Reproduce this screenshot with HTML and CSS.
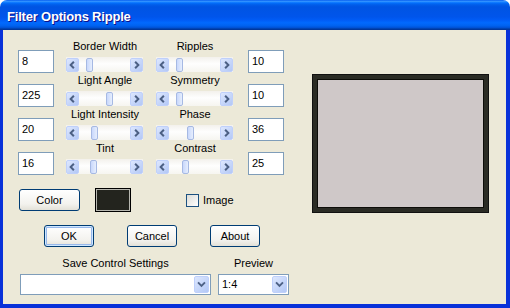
FILE: index.html
```html
<!DOCTYPE html>
<html lang="en">
<head>
<meta charset="UTF-8">
<title>Filter Options Ripple</title>
<link rel="stylesheet" href="styles.css">
</head>
<body>
<div class="window">
    <div class="titlebar"><span class="title">Filter Options Ripple</span></div>
    <div class="client">
        <div class="controls">
            <div class="row">
                <div class="field left">8</div>
                <div class="label c2">Border Width</div>
                <div class="label c3">Ripples</div>
                <div class="scroll c2"><span class="arrow"><svg viewBox="0 0 12 13"><path d="M7.5 3 4 6.5 7.5 10"/></svg></span><span class="track"><span class="thumb" style="left:7px"></span></span><span class="arrow"><svg viewBox="0 0 12 13"><path d="M4.5 3 8 6.5 4.5 10"/></svg></span></div>
                <div class="scroll c3"><span class="arrow"><svg viewBox="0 0 12 13"><path d="M7.5 3 4 6.5 7.5 10"/></svg></span><span class="track"><span class="thumb" style="left:7px"></span></span><span class="arrow"><svg viewBox="0 0 12 13"><path d="M4.5 3 8 6.5 4.5 10"/></svg></span></div>
                <div class="field right">10</div>
            </div>
            <div class="row">
                <div class="field left">225</div>
                <div class="label c2">Light Angle</div>
                <div class="label c3">Symmetry</div>
                <div class="scroll c2"><span class="arrow"><svg viewBox="0 0 12 13"><path d="M7.5 3 4 6.5 7.5 10"/></svg></span><span class="track"><span class="thumb" style="left:27px"></span></span><span class="arrow"><svg viewBox="0 0 12 13"><path d="M4.5 3 8 6.5 4.5 10"/></svg></span></div>
                <div class="scroll c3"><span class="arrow"><svg viewBox="0 0 12 13"><path d="M7.5 3 4 6.5 7.5 10"/></svg></span><span class="track"><span class="thumb" style="left:7px"></span></span><span class="arrow"><svg viewBox="0 0 12 13"><path d="M4.5 3 8 6.5 4.5 10"/></svg></span></div>
                <div class="field right">10</div>
            </div>
            <div class="row">
                <div class="field left">20</div>
                <div class="label c2">Light Intensity</div>
                <div class="label c3">Phase</div>
                <div class="scroll c2"><span class="arrow"><svg viewBox="0 0 12 13"><path d="M7.5 3 4 6.5 7.5 10"/></svg></span><span class="track"><span class="thumb" style="left:12px"></span></span><span class="arrow"><svg viewBox="0 0 12 13"><path d="M4.5 3 8 6.5 4.5 10"/></svg></span></div>
                <div class="scroll c3"><span class="arrow"><svg viewBox="0 0 12 13"><path d="M7.5 3 4 6.5 7.5 10"/></svg></span><span class="track"><span class="thumb" style="left:18px"></span></span><span class="arrow"><svg viewBox="0 0 12 13"><path d="M4.5 3 8 6.5 4.5 10"/></svg></span></div>
                <div class="field right">36</div>
            </div>
            <div class="row">
                <div class="field left">16</div>
                <div class="label c2">Tint</div>
                <div class="label c3">Contrast</div>
                <div class="scroll c2"><span class="arrow"><svg viewBox="0 0 12 13"><path d="M7.5 3 4 6.5 7.5 10"/></svg></span><span class="track"><span class="thumb" style="left:11px"></span></span><span class="arrow"><svg viewBox="0 0 12 13"><path d="M4.5 3 8 6.5 4.5 10"/></svg></span></div>
                <div class="scroll c3"><span class="arrow"><svg viewBox="0 0 12 13"><path d="M7.5 3 4 6.5 7.5 10"/></svg></span><span class="track"><span class="thumb" style="left:13px"></span></span><span class="arrow"><svg viewBox="0 0 12 13"><path d="M4.5 3 8 6.5 4.5 10"/></svg></span></div>
                <div class="field right">25</div>
            </div>

            <div class="color-row">
                <div class="btn color-btn">Color</div>
                <div class="swatch"></div>
                <div class="check"></div>
                <span class="check-label">Image</span>
            </div>

            <div class="button-row">
                <div class="btn focused">OK</div>
                <div class="btn">Cancel</div>
                <div class="btn">About</div>
            </div>

            <div class="save-row">
                <div class="label">Save Control Settings</div>
                <div class="label">Preview</div>
                <div class="combo"><span class="value"></span><span class="drop"><svg viewBox="0 0 15 17"><path d="M3.5 6 7.5 10 11.5 6"/></svg></span></div>
                <div class="combo"><span class="value">1:4</span><span class="drop"><svg viewBox="0 0 15 17"><path d="M3.5 6 7.5 10 11.5 6"/></svg></span></div>
            </div>
        </div>

        <div class="preview">
            <div class="preview-inner"></div>
        </div>
    </div>
</div>
</body>
</html>
```

FILE: styles.css
```css
body {
    margin: 0;
    background: #fff;
    font-family: "Liberation Sans", Arial, sans-serif;
    font-size: 11px;
    color: #000;
}
.window {
    width: 510px;
    height: 308px;
    display: flex;
    flex-direction: column;
    border-radius: 7px 7px 0 0;
    overflow: hidden;
}
.titlebar {
    height: 30px;
    flex: none;
    display: flex;
    align-items: center;
    padding-left: 7px;
    background: linear-gradient(to bottom, #0058ee 0%, #3593ff 4%, #288eff 6%, #127dff 8%, #036ffc 10%, #0262ee 14%, #0057e5 20%, #0054e3 24%, #0055eb 56%, #005bf5 66%, #026afe 76%, #0062ef 86%, #0052d6 92%, #0040ab 96%, #003092 100%);
}
.title {
    color: #fff;
    font-weight: bold;
    font-size: 13px;
    letter-spacing: -0.2px;
    text-shadow: 1px 1px #0f1089;
    margin-top: 2px;
}
.client {
    flex: 1;
    display: flex;
    background: #ece9d8;
    border: 0 solid #0831d9;
    border-width: 0 4px 4px 3px;
}
.controls {
    width: 271px;
    margin-left: 15px;
    padding-top: 10px;
}

/* slider rows */
.row {
    display: grid;
    grid-template-columns: 36px 78px 78px 38px;
    grid-template-rows: 17px 17px;
    column-gap: 12px;
}
.label {
    grid-row: 1;
    line-height: 13px;
    text-align: center;
}
.c2 { grid-column: 2; }
.c3 { grid-column: 3; }
.field {
    grid-row: 1 / 3;
    align-self: end;
    margin-bottom: 1px;
    width: 36px;
    height: 23px;
    box-sizing: border-box;
    border: 1px solid #7f9db9;
    background: #fff;
    padding: 4px 0 0 3px;
    line-height: 13px;
}
.field.left { grid-column: 1; }
.field.right { grid-column: 4; justify-self: end; }
.scroll {
    grid-row: 2;
    width: 77px;
    height: 15px;
    display: flex;
    align-self: start;
    background: linear-gradient(to bottom, #f3f1ec, #fefefe 45%, #f6f5f0);
}
.arrow {
    width: 13px;
    height: 14px;
    box-sizing: border-box;
    border: 1px solid #bfd0fb;
    border-radius: 2px;
    background: linear-gradient(135deg, #dde7fe, #b3c8f6);
    margin-top: 1px;
}
.arrow svg {
    display: block;
    width: 11px;
    height: 12px;
}
.arrow path, .drop path {
    fill: none;
    stroke: #4d6185;
    stroke-width: 2.2;
}
.track {
    flex: 1;
    position: relative;
}
.thumb {
    position: absolute;
    top: 1px;
    width: 7px;
    height: 14px;
    box-sizing: border-box;
    border: 1px solid #a6b9e3;
    border-radius: 2px;
    background: linear-gradient(to right, #c9d8fc, #e6eefd);
}

/* color / image row */
.color-row {
    display: flex;
    align-items: center;
    margin-top: 12px;
    height: 24px;
}
.btn {
    width: 50px;
    height: 22px;
    box-sizing: border-box;
    border: 1px solid #003c74;
    border-radius: 3px;
    background: linear-gradient(to bottom, #fff, #f3f2ee 70%, #e3e1d8);
    text-align: center;
    line-height: 20px;
}
.color-btn {
    width: 61px;
    margin-left: 1px;
}
.btn.focused {
    box-shadow: inset 0 0 0 1px #cee7ff, inset 0 0 0 2px #98b8ea;
}
.swatch {
    width: 36px;
    height: 24px;
    box-sizing: border-box;
    margin-left: 15px;
    border: 1px solid #000;
    box-shadow: inset 0 0 0 1px #b7b7b0;
    background: #23241e;
}
.check {
    width: 13px;
    height: 13px;
    box-sizing: border-box;
    margin-left: 55px;
    border: 1px solid #1c5180;
    background: linear-gradient(135deg, #dcdcd7, #fff);
}
.check-label {
    margin-left: 4px;
}

/* OK / Cancel / About */
.button-row {
    display: flex;
    gap: 33px;
    margin-top: 13px;
    margin-left: 26px;
}

/* save settings + preview combos */
.save-row {
    display: grid;
    grid-template-columns: 191px 71px;
    grid-template-rows: 17px 21px;
    column-gap: 7px;
    margin-top: 10px;
    margin-left: 2px;
}
.save-row .label {
    grid-row: 1;
}
.combo {
    grid-row: 2;
    display: flex;
    box-sizing: border-box;
    height: 21px;
    border: 1px solid #7f9db9;
    background: #fff;
    padding: 1px;
}
.combo .value {
    flex: 1;
    padding: 2px 0 0 2px;
    line-height: 13px;
}
.drop {
    width: 15px;
    height: 17px;
    box-sizing: border-box;
    border: 1px solid #bfd0fb;
    border-radius: 2px;
    background: linear-gradient(135deg, #dde7fe, #b3c8f6);
}
.drop svg {
    display: block;
    width: 13px;
    height: 15px;
}

/* preview picture */
.preview {
    width: 177px;
    height: 139px;
    box-sizing: border-box;
    margin: 44px 0 0 23px;
    border: 1px solid #111;
    padding: 4px;
    background: #2b2c25;
}
.preview-inner {
    height: 100%;
    box-sizing: border-box;
    border: 1px solid #0d0d09;
    background: #cfc8c8;
}
```
